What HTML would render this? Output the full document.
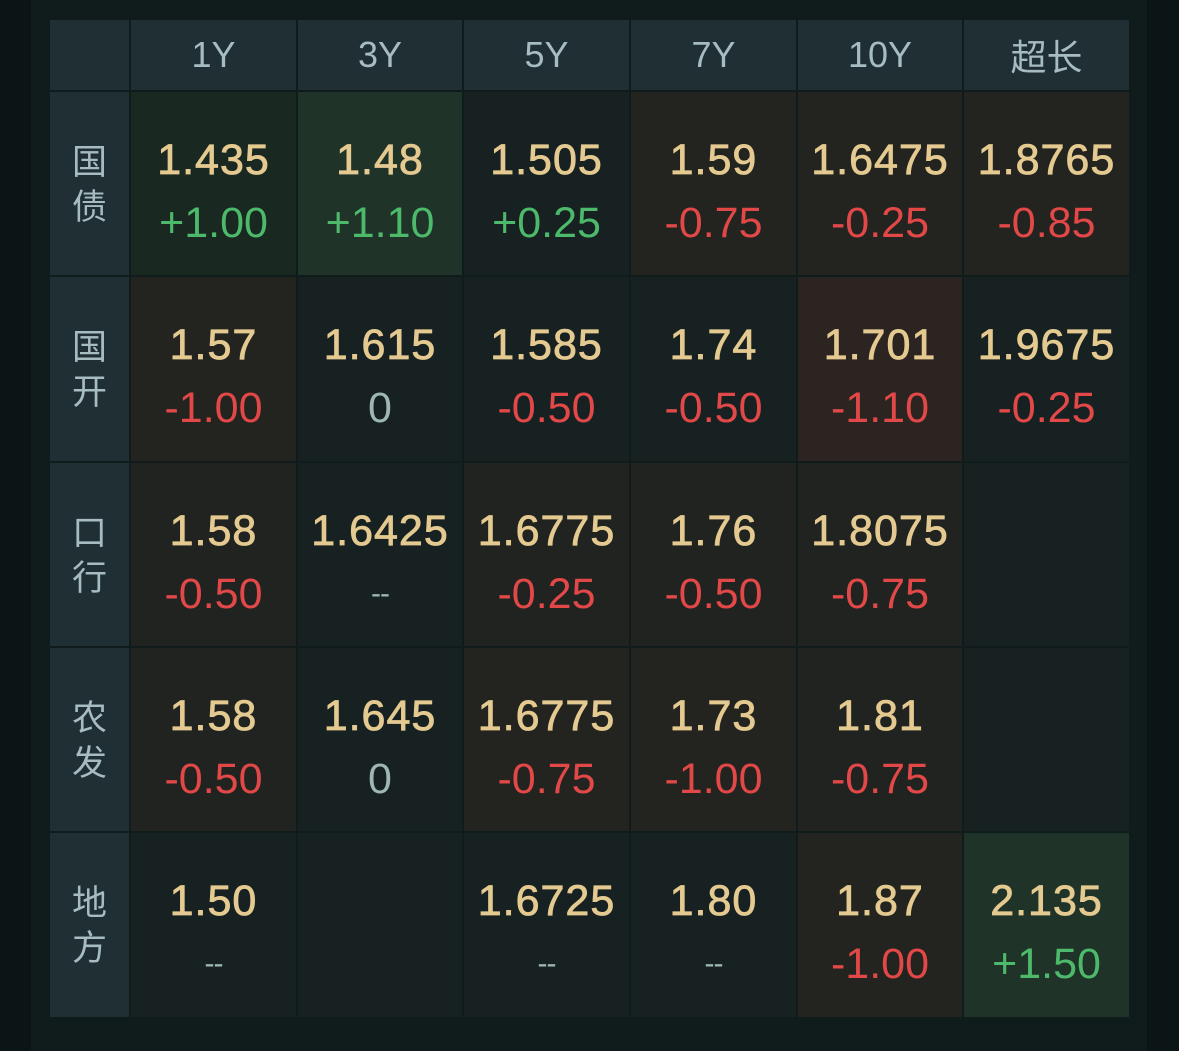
<!DOCTYPE html>
<html><head><meta charset="utf-8"><style>
html,body{margin:0;padding:0;width:1179px;height:1051px;overflow:hidden;background:#0b1515;}
.panel{position:absolute;left:31px;top:0;width:1116px;height:1051px;background:#101b1c;}
.c{position:absolute;box-sizing:border-box;}
.h{background:#1f2f34;color:#a6bcc1;font:36px "Liberation Sans","Noto Sans CJK SC",sans-serif;display:flex;align-items:center;justify-content:center;}
.lab{background:#1f2f34;color:#a6bcc1;font:35px "Noto Sans CJK SC",sans-serif;line-height:45px;text-align:center;padding-top:45px;}
.n{background:#172122;}
.g1{background:#1a2822;}
.g2{background:#1f3329;}
.b1{background:#202320;}
.b2{background:#23231f;}
.b3{background:#2c2420;}
.t{position:absolute;left:0;right:0;text-align:center;font-family:"Liberation Sans",sans-serif;font-size:43px;letter-spacing:1px;line-height:50px;}
.a{top:43px;color:#e4ca90;-webkit-text-stroke:0.8px #e4ca90;}
.b{top:106px;letter-spacing:0;}
.up{color:#4dba6b}.dn{color:#e24848}.z{color:#9fb6b6}
.dd{font-size:30px;letter-spacing:-1px;}
</style></head><body>
<div class="panel"></div>
<div id="t"></div>
<script>
var xs=[50,131,298,464,631,798,964],ws=[79,165,164,165,165,164,165];
var ys=[92,277,463,648,833],hs=[183,184,183,183,184];
var hd=["1Y","3Y","5Y","7Y","10Y","超长"];
var lb=[["国","债"],["国","开"],["口","行"],["农","发"],["地","方"]];
var d=[
[["g1","1.435","+1.00"],["g2","1.48","+1.10"],["n","1.505","+0.25"],["b2","1.59","-0.75"],["b2","1.6475","-0.25"],["b2","1.8765","-0.85"]],
[["b2","1.57","-1.00"],["n","1.615","0"],["n","1.585","-0.50"],["n","1.74","-0.50"],["b3","1.701","-1.10"],["n","1.9675","-0.25"]],
[["b1","1.58","-0.50"],["n","1.6425","--"],["b1","1.6775","-0.25"],["b1","1.76","-0.50"],["b1","1.8075","-0.75"],["n","",""]],
[["b1","1.58","-0.50"],["n","1.645","0"],["b2","1.6775","-0.75"],["b2","1.73","-1.00"],["b1","1.81","-0.75"],["n","",""]],
[["n","1.50","--"],["n","",""],["n","1.6725","--"],["n","1.80","--"],["b2","1.87","-1.00"],["g2","2.135","+1.50"]]];
var h='<div class="c h" style="left:50px;top:20px;width:79px;height:70px"></div>';
for(var i=0;i<6;i++)h+='<div class="c h" style="left:'+xs[i+1]+'px;top:20px;width:'+ws[i+1]+'px;height:70px">'+hd[i]+'</div>';
for(var r=0;r<5;r++){
h+='<div class="c lab" style="left:50px;top:'+ys[r]+'px;width:79px;height:'+hs[r]+'px">'+lb[r][0]+'<br>'+lb[r][1]+'</div>';
for(var i=0;i<6;i++){var v=d[r][i];var cl=v[2][0]=='+'?'up':(v[2][0]=='-'&&v[2]!='--'?'dn':'z');if(v[2]=='--')cl+=' dd';
h+='<div class="c '+v[0]+'" style="left:'+xs[i+1]+'px;top:'+ys[r]+'px;width:'+ws[i+1]+'px;height:'+hs[r]+'px"><div class="t a">'+v[1]+'</div><div class="t b '+cl+'">'+v[2]+'</div></div>';}}
document.getElementById('t').innerHTML=h;
</script>
</body></html>
